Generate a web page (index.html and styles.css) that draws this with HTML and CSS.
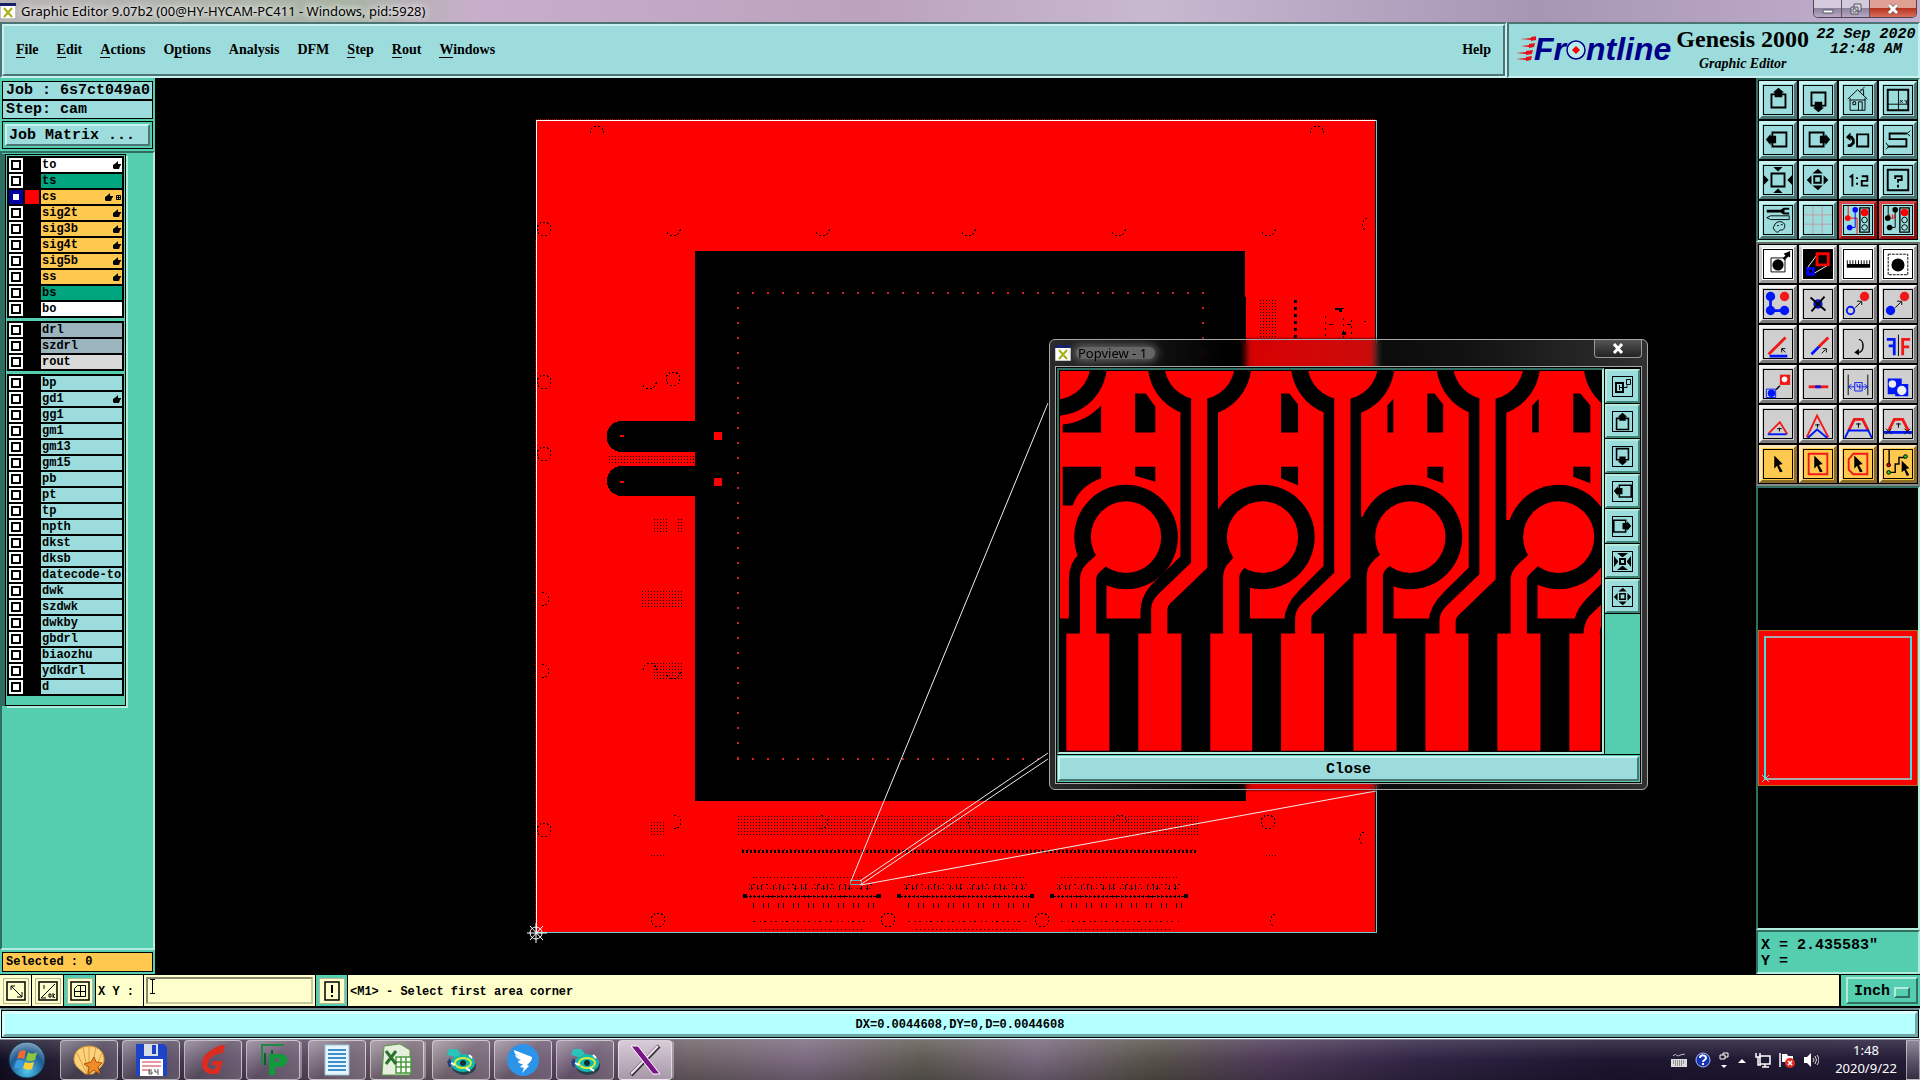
FILE: index.html
```html
<!DOCTYPE html>
<html lang="en">
<head>
  <meta charset="UTF-8" />
  <meta name="viewport" content="width=device-width, initial-scale=1.0" />
  <title>Graphic Editor 9.07b2</title>
  <link rel="stylesheet" href="styles.css">
</head>
<body>
  <!-- shared icons -->
  <svg width="0" height="0" class="defs" aria-hidden="true">
    <symbol id="i-up" viewBox="0 0 30 30"><path d="M8 9h15v14H8z" fill="none" stroke="#000" stroke-width="2"/><path d="M15.5 2l6 5h-2v5h-8V7h-2z"/></symbol>
    <symbol id="i-down" viewBox="0 0 30 30"><path d="M8 7h15v14H8z" fill="none" stroke="#000" stroke-width="2"/><path d="M15.5 28l-6-5h2v-6h8v6h2z"/></symbol>
    <symbol id="i-left" viewBox="0 0 30 30"><path d="M9 7h15v15H9z" fill="none" stroke="#000" stroke-width="2"/><path d="M2 14.500l5-6v2h6v8H7v2z"/></symbol>
    <symbol id="i-right" viewBox="0 0 30 30"><path d="M6 7h15v15H6z" fill="none" stroke="#000" stroke-width="2"/><path d="M28 14.500l-5-6v2h-6v8h6v2z"/></symbol>
    <symbol id="i-zoomin" viewBox="0 0 30 30"><path d="M8 8h14v14H8z" fill="none" stroke="#000" stroke-width="2"/><path d="M10 1h10l-5 5zM10 29h10l-5-5zM0 10v10l5-5zM30 10v10l-5-5z"/></symbol>
    <symbol id="i-zoomout" viewBox="0 0 30 30"><path d="M11 11h7v7h-7z" fill="none" stroke="#000" stroke-width="2"/><path d="M9 8h11l-5-5zM9 21h11l-5 5zM8 10v10l-5-5zM21 10v10l5-5z"/></symbol>
    <symbol id="i-cursor" viewBox="0 0 12 18"><path d="M1 0l9 9-4 1 4 7-3 1-3-7-3 3z"/></symbol>
    <symbol id="i-app" viewBox="0 0 16 16"><path d="M0 0h16v16H0z" fill="#fff" stroke="#889"/><path d="M0 0h16v3H0z" fill="#16216a"/><path d="M4 5l8 9M12 5l-8 9" stroke="#a6b013" stroke-width="2"/></symbol>
    <symbol id="i-disc" viewBox="0 0 34 34"><ellipse cx="20" cy="23" rx="12" ry="9" fill="#28404c"/><ellipse cx="19" cy="20" rx="12" ry="9" fill="#16b7ae"/><ellipse cx="19" cy="20" rx="8" ry="5" fill="none" stroke="#d9ec3a" stroke-width="2"/><circle cx="19" cy="20" r="3" fill="#102f38"/><path d="M5 6h8l4 5-6 3-8-2z" fill="#2bc4bc"/><path d="M5 16l3 6M4 18l2 6" stroke="#1c3c88" stroke-width="2"/><path d="M7 20l4 2M25 12l3 3M22 25l4 3" stroke="#fff" stroke-width="2"/></symbol>
  </svg>

  <header class="titlebar">
    <svg width="16" height="16"><use href="#i-app"/></svg>
    <span class="title">Graphic Editor 9.07b2 (00@HY-HYCAM-PC411 - Windows, pid:5928)</span>
    <div class="win-buttons">
      <button type="button" aria-label="Minimize"><svg width="12" height="12"><path d="M1 7h10v3H1z" fill="#fff" stroke="#556"/></svg></button>
      <button type="button" aria-label="Restore"><svg width="12" height="12"><path d="M4 1h7v7H4zM1 4h7v7H1z" fill="#ddd" stroke="#556"/><path d="M3 6h3v3H3z" fill="#fff" stroke="#556"/></svg></button>
      <button type="button" class="win-close" aria-label="Close window"><svg width="12" height="12"><path d="M2 2l8 8M10 2l-8 8" stroke="#644" stroke-width="4"/><path d="M2 2l8 8M10 2l-8 8" stroke="#fff" stroke-width="3"/></svg></button>
    </div>
  </header>

  <div class="topbar">
    <div class="menu-frame">
      <nav class="menu">
        <button type="button"><u>F</u>ile</button>
        <button type="button"><u>E</u>dit</button>
        <button type="button"><u>A</u>ctions</button>
        <button type="button">O<u>p</u>tions</button>
        <button type="button">Analysis</button>
        <button type="button">DFM</button>
        <button type="button"><u>S</u>tep</button>
        <button type="button"><u>R</u>out</button>
        <button type="button"><u>W</u>indows</button>
        <button type="button" class="help">Help</button>
      </nav>
    </div>
    <div class="brand">
      <div class="logo">
        <svg class="speed" width="20" height="26" viewBox="0 0 20 26"><path d="M4 3l11-1V1l6-1-1 4-5 1V4zM5 10l8-1V8l6-1-1 4-5 1v-1zM0 17l10-1v-1l7-1-1 4-6 1v-1zM0 23l10-1v-1l6-1-1 4-5 1v-1z" fill="#e8101c"/></svg>
        <span>Fr</span><svg width="20" height="22" viewBox="0 0 20 22"><circle cx="10" cy="12" r="9" fill="#b8ecec" stroke="#00008b" stroke-width="1.500"/><path d="M10 8l4 4-4 4-4-4z" fill="#f00"/></svg><span>ntline</span>
      </div>
      <div class="product"><strong>Genesis 2000</strong><em>Graphic Editor</em></div>
      <div class="clock">22 Sep 2020<br>12:48 AM</div>
    </div>
  </div>

  <main>
    <aside class="side">
      <div class="job-line">Job : 6s7ct049a0</div>
      <div class="job-line">Step: cam</div>
      <div class="matrix"><button type="button">Job Matrix ...</button></div>
      <div class="layers-pane">
        <div class="layers" id="layers"></div>
      </div>
      <div class="selected">Selected : 0</div>
    </aside>

    <section class="canvas">
      <svg class="board" width="100%" height="100%" shape-rendering="crispEdges">
        <defs>
          <pattern id="grid" width="3" height="3" patternUnits="userSpaceOnUse"><rect width="3" height="3" fill="#f00"/><rect width="1" height="1"/></pattern>
        </defs>
        <g transform="translate(-154 -78)">
          <rect x="537" y="121" width="838" height="811" fill="#f00"/>
          <path d="M536 120.500h840" stroke="#fff" fill="none"/>
          <path d="M536.500 120v812" stroke="#fff" fill="none"/>
          <path d="M1376 120v812H536" stroke="#5fd0d0" fill="none"/>
          <path d="M536 119.500h840M535.500 240v690" stroke="#a00" stroke-dasharray="1 1"/>
          <path d="M695 251h550v46h1v504H695z"/>
          <path d="M696 421h-74a15 15 0 0 0 0 31h74zM696 466h-74a15 15 0 0 0 0 30h74z"/>
          <path d="M620 435h4v2h-4zM620 481h4v2h-4zM714 432h8v8h-8zM714 478h8v8h-8z" fill="#f00"/>
          <path d="M737 293h467M737 759h467" stroke="#d0202a" stroke-width="2" stroke-dasharray="2 13"/>
          <path d="M738 292v468M1203 292v468" stroke="#d0202a" stroke-width="2" stroke-dasharray="2 13"/>

          <g fill="url(#grid)">
            <path d="M608 454h87v10h-87zM654 518h13v16h-13zM678 518h4v16h-4zM642 591h40v16h-40zM654 663h28v16h-28z"/>
            <path d="M738 816h460v21H738zM651 822h13v15h-13zM1260 298h17v42h-17zM651 854h13v2h-13zM1266 854h11v2h-11z"/>
          </g>
          <g id="marks" fill="none" stroke="#000" stroke-dasharray="2 2"></g>

          <!-- connector rows along the bottom edge -->
          <path d="M742 851h456" stroke="#000" stroke-width="3" stroke-dasharray="2 2"/>
          <path d="M742 849.500h456" stroke="#000" stroke-dasharray="1 5"/>
          <g id="connectors" stroke="#000" fill="none"></g>
          <path d="M743 894h4v4h-4zM877 894h4v4h-4zM897 894h4v4h-4zM1030 894h4v4h-4zM1050 894h4v4h-4zM1184 894h4v4h-4z"/>
          <path d="M1295.500 300v40" stroke="#000" stroke-width="3" stroke-dasharray="3 4"/>
          <path d="M1335 308h9v1h-2v3h-3v-2h-4zM1329 324h4v1h-4zM1347 324h4v1h-4zM1342 332h4v3h-4zM1364 321h2v1h-2z"/>
          <path d="M1325.500 316v24M1343.500 318v22M1351.500 320v20" stroke="#000" stroke-dasharray="2 4"/>

          <!-- leader lines to the popview -->
          <g stroke="#eee" fill="none" shape-rendering="auto">
            <path d="M850.500 880.500h11v4h-11z" stroke="#5fb0b0"/>
            <path d="M851 881L1048 403M860 881L1048 753M860 885L1048 759M861 885L1376 791"/>
          </g>
          <g stroke="#fff" fill="none" shape-rendering="auto">
            <circle cx="536" cy="933" r="6"/>
            <path d="M536 923v20M527 933h20M530 926l13 14M543 926l-13 14"/>
          </g>
        </g>
      </svg>

      <div class="popview">
        <div class="pop-title">
          <svg width="16" height="16"><use href="#i-app"/></svg>
          <span>Popview - 1</span>
          <button type="button" aria-label="Close popview"><svg width="12" height="11"><path d="M2 1l8 9M10 1l-8 9" stroke="#fff" stroke-width="3"/></svg></button>
        </div>
        <div class="pop-body">
          <div class="pop-row">
            <div class="pop-view">
              <svg viewBox="50 125 1368 1135" preserveAspectRatio="none">
                <rect x="50" y="125" width="1368" height="1135" fill="#f00"/>
                <!-- clearances -->
                <path d="M240 192h27l24 40v77h-51zM609 192h21l22 33v84h-43zM979 192h18l22 33v84h-40zM1348 192h18l25 36v81h-43zM878 228l15-20v101h-15zM1244 228l17-20v101h-17zM57 285q58-8 97-57v81H57z"/>
                <path d="M57 411h97v34q-56 24-72 82H57zM240 411h51v45l-51-18zM609 411h43v55l-43-21zM979 411h40v49l-40-17zM1348 411h43v49l-43-19z"/>
                <path d="M50 864h1368v396H50z"/>
                <ellipse cx="38" cy="104" rx="131" ry="155"/><ellipse cx="403" cy="104" rx="131" ry="155"/><ellipse cx="765" cy="104" rx="131" ry="155"/><ellipse cx="1133" cy="104" rx="131" ry="155"/><ellipse cx="1506" cy="104" rx="132" ry="155"/>
                <ellipse cx="217" cy="621" rx="131" ry="156"/><ellipse cx="562" cy="621" rx="132" ry="156"/><ellipse cx="936" cy="621" rx="131" ry="156"/><ellipse cx="1311" cy="621" rx="131" ry="156"/>
                <path d="M422 540h48v369H322v-80l100-114zM784 560h56v349H686v-49l98-120zM1153 570h60v339h-161v-41l101-118z"/>
                <g fill="none" stroke="#000" stroke-width="95">
                  <path d="M402 200v497l-72 82q-29 30-29 65v56M764 200v525l-72 85q-27 32-27 60v35M1131 200v530l-74 86q-27 31-27 60v35"/>
                  <path d="M155 680l-22 24q-13 14-13 45v151M520 680l-24 28q-13 14-13 45v151M890 680l-30 28q-14 14-14 45v151M1262 680l-38 30q-14 18-14 45v151M1480 762l-63 75q-22 28-22 60v10"/>
                </g>
                <!-- copper -->
                <g fill="#f00">
                  <ellipse cx="38" cy="104" rx="89" ry="106"/><ellipse cx="403" cy="104" rx="89" ry="106"/><ellipse cx="765" cy="104" rx="89" ry="106"/><ellipse cx="1133" cy="104" rx="89" ry="106"/>
                  <ellipse cx="217" cy="621" rx="89" ry="107"/><ellipse cx="562" cy="621" rx="90" ry="107"/><ellipse cx="936" cy="621" rx="89" ry="107"/><ellipse cx="1311" cy="621" rx="90" ry="107"/>
                  <path d="M66 909h109v350H66zM248 909h109v350H248zM430 909h106v350H430zM609 909h109v350H609zM792 909h109v350H792zM974 909h109v350H974zM1156 909h109v350h-109zM1338 909h78v350h-78z"/>
                </g>
                <g fill="none" stroke="#f00" stroke-width="41">
                  <path d="M402 190v515l-88 100q-13 14-13 32v80M764 190v545l-86 98q-13 14-13 32v50M1131 190v550l-88 100q-13 14-13 32v43"/>
                  <path d="M160 685l-26 28q-13 14-13 32v170M512 685l-16 22q-13 14-13 32v176M882 680l-22 22q-14 16-14 37v176M1256 680l-32 36q-14 16-14 32v170M1460 806l-54 62q-12 14-12 50"/>
                </g>
              </svg>
            </div>
            <div class="pop-tools">
              <button type="button" aria-label="Follow"><svg viewBox="0 0 19 19"><path d="M3 6h7v9H3z" fill="none" stroke="#000" stroke-width="2"/><path d="M13.500 2.500h4v5h-4zM7 10.500h7v-2M6.500 8v5" fill="none" stroke="#000"/></svg></button>
              <button type="button" aria-label="Pan up"><svg viewBox="4 1 23 24"><use href="#i-up" width="30" height="30"/></svg></button>
              <button type="button" aria-label="Pan down"><svg viewBox="4 5 23 24"><use href="#i-down" width="30" height="30"/></svg></button>
              <button type="button" aria-label="Pan left"><svg viewBox="1 3 24 24"><use href="#i-left" width="30" height="30"/></svg></button>
              <button type="button" aria-label="Pan right"><svg viewBox="5 3 24 24"><use href="#i-right" width="30" height="30"/></svg></button>
              <button type="button" aria-label="Zoom in"><svg viewBox="0 0 19 19"><path d="M7 7h5v5H7z" fill="none" stroke="#000" stroke-width="2"/><path d="M4 1h11l-5 4H9zM4 18h11l-5-4H9zM1 4v11l4-5V9zM18 4v11l-4-5V9z"/></svg></button>
              <button type="button" aria-label="Zoom out"><svg viewBox="2 2 25 25"><use href="#i-zoomout" width="30" height="30"/></svg></button>
            </div>
          </div>
          <div class="pop-close"><button type="button">Close</button></div>
        </div>
      </div>
    </section>

    <aside class="tools">
      <div class="tool-grid view-tools">
        <button type="button" aria-label="Pan up"><svg><use href="#i-up"/></svg></button>
        <button type="button" aria-label="Pan down"><svg><use href="#i-down"/></svg></button>
        <button type="button" aria-label="Home"><svg viewBox="0 0 30 30"><path d="M4 14L14.500 4 25 14M6.500 13v13h16V13M6 15h17M15.500 26v-9h4v9M9.500 17h3v3h-3zM18 6V4h3v6M20 3l2-2" fill="none" stroke="#000"/></svg></button>
        <button type="button" aria-label="XY zoom"><svg viewBox="0 0 30 30"><path d="M4 4h22v22H4z" fill="none" stroke="#000" stroke-width="2"/><path d="M15.500 4v22M4 19.500h22M17 15l3 3M20 15l-3 3M22 15l2 2 1-2M24 17v2" fill="none" stroke="#000"/></svg></button>
        <button type="button" aria-label="Pan left"><svg><use href="#i-left"/></svg></button>
        <button type="button" aria-label="Pan right"><svg><use href="#i-right"/></svg></button>
        <button type="button" aria-label="Previous view"><svg viewBox="0 0 30 30"><path d="M14 9h12v13H14z" fill="none" stroke="#000" stroke-width="2"/><path d="M4 12h4l2 3v3l-3 3H4" fill="none" stroke="#000" stroke-width="3"/><path d="M2 12l5-5v9z"/></svg></button>
        <button type="button" aria-label="Serpentine"><svg viewBox="0 0 30 30"><path d="M25 8H6v6h18v8H4" fill="none" stroke="#000" stroke-width="2"/><path d="M28 5l-3 3 3 3M2 18l3 4-3 3" fill="none" stroke="#000"/></svg></button>
        <button type="button" aria-label="Zoom in"><svg><use href="#i-zoomin"/></svg></button>
        <button type="button" aria-label="Zoom out"><svg><use href="#i-zoomout"/></svg></button>
        <button type="button" aria-label="Scale 1:2"><svg viewBox="0 0 30 30"><path d="M6 12l3-2v12M14 12v2M14 18v2M19 11h6v5h-6v5h7" fill="none" stroke="#000" stroke-width="2"/></svg></button>
        <button type="button" aria-label="Query"><svg viewBox="0 0 30 30"><path d="M4 4h22v22H4z" fill="none" stroke="#000" stroke-width="2"/><path d="M12 14v-3h7v4h-4v3M15 20v3" fill="none" stroke="#000" stroke-width="2"/></svg></button>
        <button type="button" aria-label="Setup"><svg viewBox="0 0 30 30"><path d="M3 4h15v3H3zM27 2h-6l-3 2v3l3 2h6V7h-5V4h5z"/><path d="M3 12.500l4-2h20v4H7zM12 19c5-5 12-1 10 4s-5 1-6 4-6-1-6-4zM14 21h2M18 20h2" fill="none" stroke="#000"/></svg></button>
        <button type="button" aria-label="Grid"><svg viewBox="0 0 30 30"><path d="M9.500 0v30M19.500 0v30M0 9.500h30M0 19.500h30" stroke="#c79aa2"/></svg></button>
        <button type="button" class="alert" aria-label="Snap"><svg viewBox="0 0 30 30"><path d="M4.500 0v13H14v17" fill="none" stroke="#f00"/><path d="M12 4v19H6" fill="none" stroke="#00f"/><circle cx="12" cy="4" r="3" fill="#00f"/><circle cx="6" cy="23" r="3" fill="#00f"/><circle cx="4" cy="13" r="3" fill="#f00"/><path d="M17 2h10v26H17z" fill="none" stroke="#000" stroke-width="1.500"/><circle cx="22" cy="7" r="4" fill="#f00"/><circle cx="22" cy="15" r="3" fill="none" stroke="#000"/><circle cx="22" cy="23" r="3" fill="none" stroke="#000"/></svg></button>
        <button type="button" class="alert" aria-label="Net check"><svg viewBox="0 0 30 30"><path d="M4.500 0v13M12 4v19H6" fill="none" stroke="#000"/><path d="M5 13h6M6 13v-4M9 13v-4M11 13V9" stroke="#f00"/><circle cx="12" cy="4" r="3"/><circle cx="6" cy="23" r="3"/><circle cx="4" cy="13" r="3"/><path d="M17 2h10v26H17z" fill="none" stroke="#000" stroke-width="1.500"/><circle cx="22" cy="7" r="4" fill="#f00"/><circle cx="22" cy="15" r="3" fill="none" stroke="#000"/><circle cx="22" cy="23" r="3" fill="none" stroke="#000"/></svg></button>
      </div>

      <div class="tool-grid edit-tools">
        <button type="button" class="white" aria-label="Select feature"><svg viewBox="0 0 30 30"><path d="M7.500 8.500h15v15h-15z" fill="none" stroke="#000"/><circle cx="15" cy="16" r="6"/><path d="M20 9l3-3-2-2 7-3v7l-2-1-4 4z"/></svg></button>
        <button type="button" class="white" aria-label="Popview"><svg viewBox="0 0 30 30"><path d="M0 0h30v30H0z"/><path d="M3 20L14 5M9 26l17-10" stroke="#fff"/><path d="M14 4h12v12H14z" fill="none" stroke="#f00" stroke-width="3"/><path d="M4 20h6v6H4z" fill="none" stroke="#00f" stroke-width="3"/></svg></button>
        <button type="button" class="white" aria-label="Measure"><svg viewBox="0 0 30 30"><path d="M3 11v8h25v-8h-1v4h-2v-4h-1v4h-2v-4h-1v4h-2v-4h-1v4h-2v-4h-1v4h-2v-4h-1v4h-2v-4h-1v4H7v-4H6v4H4v-4z"/></svg></button>
        <button type="button" class="white" aria-label="Highlight"><svg viewBox="0 0 30 30"><path d="M4.500 4.500h21v22h-21z" fill="none" stroke="#000" stroke-dasharray="3 1"/><circle cx="15" cy="16" r="7"/></svg></button>
        <button type="button" aria-label="Net"><svg viewBox="0 0 30 30"><path d="M7 7v15h14" fill="none" stroke="#0018f8" stroke-width="3"/><g fill="#0018f8"><circle cx="7" cy="7" r="5"/><circle cx="7" cy="22" r="5"/><circle cx="22" cy="22" r="5"/></g><circle cx="22" cy="7" r="5" fill="#f01818"/></svg></button>
        <button type="button" aria-label="Delete"><svg viewBox="0 0 30 30"><circle cx="15" cy="15" r="5" fill="#0018c8"/><path d="M7 8l16 14M22 7L8 23" stroke="#000" stroke-width="2"/></svg></button>
        <button type="button" aria-label="Move"><svg viewBox="0 0 30 30"><circle cx="22" cy="7" r="5" fill="#f01818"/><circle cx="7" cy="22" r="4" fill="none" stroke="#0018f8" stroke-width="2"/><path d="M12 19l6-6M14 12h5v4" fill="none" stroke="#000"/></svg></button>
        <button type="button" aria-label="Copy"><svg viewBox="0 0 30 30"><circle cx="22" cy="7" r="5" fill="#f01818"/><circle cx="7" cy="22" r="5" fill="#0018f8"/><path d="M12 19l6-6M14 12h5v4" fill="none" stroke="#000"/></svg></button>
        <button type="button" aria-label="Rotate line"><svg viewBox="0 0 30 30"><path d="M5 26L23 8" stroke="#f01818" stroke-width="3"/><path d="M6 28h19" stroke="#0018f8" stroke-width="3"/><path d="M23 24l-4-4M19 24v-4h4" fill="none" stroke="#000"/></svg></button>
        <button type="button" aria-label="Stretch line"><svg viewBox="0 0 30 30"><path d="M8 26l9-9" stroke="#0018f8" stroke-width="3"/><path d="M16 18L26 8" stroke="#f01818" stroke-width="3"/><path d="M19 25l4-4M20 20h4v4" fill="none" stroke="#000"/></svg></button>
        <button type="button" aria-label="Rotate"><svg viewBox="0 0 30 30"><path d="M16 10c6 1 6 14-1 14" fill="none" stroke="#000" stroke-width="1.500"/><path d="M11 24l5-4v7z"/></svg></button>
        <button type="button" aria-label="Mirror"><svg viewBox="0 0 30 30"><path d="M3 10h8v17M5 17h6" fill="none" stroke="#0018f8" stroke-width="3"/><path d="M15.500 5v23" stroke="#000"/><path d="M28 10h-8v17M20 18h7" fill="none" stroke="#f01818" stroke-width="3"/></svg></button>
        <button type="button" aria-label="Change symbol"><svg viewBox="0 0 30 30"><path d="M17 5h11v11H17z" fill="#f01818"/><circle cx="22" cy="10" r="3" fill="#fff"/><path d="M2.500 20.500h10v9h-10z" fill="none" stroke="#0018f8"/><circle cx="8" cy="25" r="4" fill="#0018f8"/><path d="M13 21l4-4" stroke="#000" stroke-width="1.500"/></svg></button>
        <button type="button" aria-label="Break line"><svg viewBox="0 0 30 30"><path d="M5 18h21" stroke="#f01818" stroke-width="3"/><path d="M12 18h6" stroke="#0018f8" stroke-width="3"/></svg></button>
        <button type="button" aria-label="Spacing"><svg viewBox="0 0 30 30"><path d="M4.500 5v22M25.500 5v22" stroke="#000"/><path d="M5 18h6M19 18h6M8 15l-3 3 3 3M22 15l3 3-3 3M11.500 13.500h8v9h-8zM14 15v3h4M17 15v6" fill="none" stroke="#0018f8"/></svg></button>
        <button type="button" aria-label="Merge"><svg viewBox="0 0 30 30"><path d="M4 9h15v6h7v13H12v-2H4z" fill="#0018f8"/><circle cx="9" cy="15" r="4" fill="#eee"/><circle cx="19" cy="22" r="5" fill="#eee"/></svg></button>
        <button type="button" aria-label="Arc up"><svg viewBox="0 0 30 30"><path d="M5 25l12-12 8 13" fill="none" stroke="#f01818" stroke-width="2"/><path d="M4 26h20" stroke="#0018f8" stroke-width="2"/><path d="M16.500 23v-4M14 20h5" stroke="#000"/></svg></button>
        <button type="button" aria-label="Peak"><svg viewBox="0 0 30 30"><path d="M3 29L14 6l12 23" fill="none" stroke="#f01818" stroke-width="2"/><path d="M4 30l10-9 11 9" fill="none" stroke="#0018f8" stroke-width="2"/><path d="M14.500 19v-4M12 16h5" stroke="#000"/></svg></button>
        <button type="button" aria-label="Trapezoid"><svg viewBox="0 0 30 30"><path d="M5 22l6-12h9l6 12" fill="none" stroke="#f01818" stroke-width="3"/><path d="M1 30l4-8h21l4 8" fill="none" stroke="#0018f8" stroke-width="2"/><path d="M15.500 19v-5M13 15h5" stroke="#000"/></svg></button>
        <button type="button" aria-label="Trapezoid ends"><svg viewBox="0 0 30 30"><path d="M5 22l6-12h9l6 12" fill="none" stroke="#f01818" stroke-width="3"/><path d="M0 24h30" stroke="#0018f8" stroke-width="3"/><path d="M15.500 19v-5M13 15h5M2 20l6 6M8 20l-6 6M22 20l6 6M28 20l-6 6" stroke="#000"/></svg></button>
        <button type="button" class="pick" aria-label="Select"><svg viewBox="0 0 30 30"><use href="#i-cursor" x="10" y="6" width="12" height="18"/></svg></button>
        <button type="button" class="pick" aria-label="Select in box"><svg viewBox="0 0 30 30"><path d="M5 4h20v22H5z" fill="none" stroke="#f01818" stroke-width="2"/><use href="#i-cursor" x="10" y="6" width="12" height="18"/></svg></button>
        <button type="button" class="pick" aria-label="Select in polygon"><svg viewBox="0 0 30 30"><path d="M10 4h15v22H10l-5-5V10z" fill="none" stroke="#f01818" stroke-width="2"/><use href="#i-cursor" x="10" y="6" width="12" height="18"/></svg></button>
        <button type="button" class="pick" aria-label="Select net"><svg viewBox="0 0 30 30"><path d="M5.500 0v16M7 24h5v-9h4V8h7" fill="none" stroke="#000" stroke-width="1.500"/><circle cx="5" cy="16" r="2" fill="#c00" stroke="#000"/><circle cx="5" cy="24" r="2" fill="#2c2" stroke="#000"/><circle cx="23" cy="7" r="2" fill="#2c2" stroke="#000"/><use href="#i-cursor" x="18" y="11" width="11" height="17"/></svg></button>
      </div>

      <div class="preview">
        <div class="preview-job">
          <div class="preview-box"></div>
          <svg class="datum" width="7" height="7"><path d="M0 0l7 7M7 0L0 7" stroke="#6fe0e0"/></svg>
        </div>
      </div>
      <div class="coords">X = 2.435583"<br>Y =</div>
    </aside>
  </main>

  <div class="command">
    <button type="button" class="cmd" aria-label="Absolute"><svg width="20" height="20"><path d="M1 1h18v18H1z" fill="none" stroke="#000" stroke-width="1.500"/><path d="M5 5l11 11M5 9V5h4M16 11v5h-5" fill="none" stroke="#000"/></svg></button>
    <button type="button" class="cmd" aria-label="Relative"><svg width="20" height="20"><path d="M1 1h18v18H1z" fill="none" stroke="#000" stroke-width="1.500"/><path d="M3 17L17 3M3 17h5M6 4v4M11 13h2v3h-2zM15 12v5M17 13l-2 2 2 2" fill="none" stroke="#000"/></svg></button>
    <button type="button" class="cmd teal" aria-label="Grid mode"><svg width="20" height="20"><path d="M1 1h18v18H1z" fill="none" stroke="#000" stroke-width="1.500"/><path d="M7.500 4.500h8v11h-11v-8zM10.500 4v12M4 10.500h12" fill="none" stroke="#000"/></svg></button>
    <label for="xy">X Y :</label>
    <div class="xy-box"><input type="text" id="xy"><i class="ibeam"></i></div>
    <button type="button" class="cmd teal" aria-label="Run"><svg width="20" height="20"><path d="M3 1h14v18H3z" fill="none" stroke="#000" stroke-width="1.500"/><path d="M9 4h2v8H9zM9 14h2v2H9z"/></svg></button>
    <span class="prompt">&lt;M1&gt; - Select first area corner</span>
    <div class="units">
      <select aria-label="Units"><option>Inch</option><option>mm</option></select>
    </div>
  </div>

  <div class="message"><div>DX=0.0044608,DY=0,D=0.0044608</div></div>

  <footer class="taskbar">
    <button type="button" class="start" aria-label="Start"><svg width="40" height="40" viewBox="0 0 40 40"><defs><radialGradient id="orb" cx=".5" cy=".8" r=".8"><stop offset="0" stop-color="#52c8f0"/><stop offset=".6" stop-color="#1c5a92"/><stop offset="1" stop-color="#8aa8c0"/></radialGradient></defs><circle cx="20" cy="20" r="18" fill="url(#orb)" stroke="#10304c"/><path d="M12 12q4-3 7-1l-2 8q-4-2-7 0z" fill="#f06a30"/><path d="M21 12q4 3 9 0l-2 8q-5 2-9 0z" fill="#8cc63c"/><path d="M9 21q4-3 7 0l-2 8q-4-2-7 0z" fill="#3c9ce0"/><path d="M18 22q4 2 9 0l-2 7q-4 2-9-1z" fill="#fcd034"/></svg></button>
    <div class="tasks">
      <button type="button" aria-label="Shell"><svg viewBox="0 0 34 34"><path d="M17 3c10 0 16 7 15 15-1 6-7 9-11 13h-8C9 27 3 24 2 18 1 10 7 3 17 3z" fill="#fbd27c" stroke="#c98a2c"/><path d="M15 31L5 10M16 31L11 4M17 31V3M19 31l5-27M21 31l9-21" stroke="#e0a040" fill="none"/><path d="M22 14l2 5 6 1-4 4 2 7-6-4-6 4 1-7-5-3 7-2z" fill="#f28c28" stroke="#a85410"/></svg></button>
      <button type="button" aria-label="Save"><svg viewBox="0 0 34 34"><path d="M2 1h28l3 3v29H2z" fill="#1d44c8"/><path d="M10 1h14v12H10z" fill="#d8dce4"/><path d="M18 2h4v9h-4z" fill="#1d44c8"/><path d="M6 16h23v17H6z" fill="#fff"/><path d="M8 19h19M8 23h19M8 27h8" stroke="#d03040"/><path d="M18 27h-3v4h3v-2h-3M21 26v3h3M24 26v6" fill="none" stroke="#555"/></svg></button>
      <button type="button" aria-label="G editor"><svg viewBox="0 0 34 34"><path d="M29 2c-6 0-9 2-12 4C10 10 6 14 6 21c0 9 9 12 17 9l4-12H17l-2 4h6l-2 4c-6 1-8-2-7-6 1-6 7-9 15-10z" fill="#dc2c20"/></svg></button>
      <button type="button" class="stacked" aria-label="P tool"><svg viewBox="0 0 34 34"><path d="M6 22V2h22" fill="none" stroke="#1c8c44" stroke-width="2"/><path d="M13 32V11h12c9 0 8 13-1 13h-5v8zM19 15v4h4v-4z" fill="#109a3c"/><path d="M9 10v12M16 7v4" stroke="#0a6028" stroke-width="2"/></svg></button>
      <button type="button" aria-label="Notes"><svg viewBox="0 0 34 34"><path d="M5 2h24v30H5z" fill="#e8f4fb" stroke="#9cc4dc"/><path d="M8 7h18M8 11h18M8 15h18M8 19h18M8 23h18M8 27h18" stroke="#3a90c8" stroke-width="2"/></svg></button>
      <button type="button" class="stacked" aria-label="Spreadsheet"><svg viewBox="0 0 34 34"><path d="M4 3l16-2 10 6v25H2z" fill="#e4f0dc" stroke="#5c9848"/><path d="M16 14h15v16H16zM16 19h15M16 24h15M21 14v16M26 14v16" fill="#fff" stroke="#4a9a3c" stroke-width="1.500"/><path d="M6 8l10 13M16 8L6 21" stroke="#2c7030" stroke-width="3"/></svg></button>
      <button type="button" aria-label="Genesis"><svg><use href="#i-disc"/></svg></button>
      <button type="button" aria-label="DingTalk"><svg viewBox="0 0 34 34"><circle cx="17" cy="17" r="16" fill="#2c94e8"/><path d="M8 7l18 7c0 4-3 6-5 8l2 1-7 7 2-5-4-1 3-3c-4 0-5-2-5-3l3-1c-4-1-6-4-6-5l4 1C9 12 8 9 8 7z" fill="#fff"/></svg></button>
      <button type="button" aria-label="Genesis 2"><svg><use href="#i-disc"/></svg></button>
      <button type="button" class="active stacked" aria-label="X server"><svg viewBox="0 0 34 34"><path d="M31 3L3 32" stroke="#333" stroke-width="4"/><path d="M30 3L3 31" stroke="#f4e4f4" stroke-width="2"/><path d="M3 3h7l22 28h-7z" fill="#7a1488" stroke="#fff"/></svg></button>
    </div>
    <div class="tray">
      <svg width="16" height="16" viewBox="0 0 16 16"><path d="M0 7h16v8H0z" fill="#ddd"/><path d="M2 9h12M2 11h12M4 13h8" stroke="#444" stroke-dasharray="1 1"/><path d="M2 4c3-4 4 2 7-1l5-1" fill="none" stroke="#bbb"/></svg>
      <svg width="16" height="16" viewBox="0 0 16 16"><circle cx="8" cy="8" r="7" fill="#1432b8" stroke="#aab8e8"/><path d="M5 6c0-4 6-3 6 0 0 2-3 2-3 4M8 11v2" fill="none" stroke="#fff" stroke-width="2"/></svg>
      <svg width="10" height="18" viewBox="0 0 10 18"><path d="M1 4h5v4H1zM4 4V2h5v4H6" fill="none" stroke="#fff"/><path d="M2 14h6l-3 3z" fill="#fff"/></svg>
      <svg width="10" height="16" viewBox="0 0 10 16"><path d="M1 11h8L5 7z" fill="#fff"/></svg>
      <svg width="16" height="16" viewBox="0 0 16 16"><path d="M5 4h10v8H5zM7 15h7M10 12v3" fill="none" stroke="#fff" stroke-width="1.500"/><path d="M1 1v4h4V1M3 5v8h3" fill="none" stroke="#fff" stroke-width="1.500"/></svg>
      <svg width="16" height="16" viewBox="0 0 16 16"><path d="M1 1v14" stroke="#fff" stroke-width="1.500"/><path d="M3 2h5l1 2h5v6H3z" fill="#fff"/><circle cx="11" cy="11" r="5" fill="#e02c20"/><path d="M9 9l4 4M13 9l-4 4" stroke="#fff" stroke-width="1.500"/></svg>
      <svg width="16" height="16" viewBox="0 0 16 16"><path d="M1 5h3l4-4v14l-4-4H1z" fill="#fff"/><path d="M10 6q2 2 0 4M12 4q3 4 0 8M14 3q4 5 0 10" fill="none" stroke="#ddd"/></svg>
    </div>
    <time class="wall-clock">1:48<br>2020/9/22</time>
    <button type="button" class="show-desktop" aria-label="Show desktop"></button>
  </footer>

  <script src="script.js"></script>
</body>
</html>
```

FILE: styles.css
```css
* {
  box-sizing: border-box;
}

body {
  margin: 0;
  height: 100vh;
  display: flex;
  flex-direction: column;
  overflow: hidden;
  background: #000;
  color: #000;
  font-family: "Liberation Mono", monospace;
  font-size: 12px;
  font-weight: bold;
}

button, input, select {
  margin: 0;
  padding: 0;
  border: 0;
  border-radius: 0;
  background: none;
  color: inherit;
  font: inherit;
}

svg {
  display: block;
  flex: none;
}

.defs { position: absolute; }

/* window title */
.titlebar {
  display: flex;
  align-items: center;
  gap: 5px;
  height: 22px;
  background:
    radial-gradient(ellipse at 436px 12px, #2f7a38 0, transparent 12px),
    radial-gradient(ellipse at 477px 14px, #3f8a48 0, transparent 14px),
    radial-gradient(ellipse at 522px 10px, #6f9a78 0, transparent 12px),
    radial-gradient(ellipse at 1710px 20px, #55505c 0, transparent 24px),
    radial-gradient(ellipse at 1790px 20px, #56749a 0, transparent 24px),
    linear-gradient(90deg, #b9b4b6, #a8b4a4 18%, #c9aecb 25%, #bba2bd 45%, #c8b8d0 60%, #a795b4 80%, #c4b0d0);
  font-family: "Noto Sans", sans-serif;
  font-size: 13px;
  font-weight: normal;
}

.title { text-shadow: 0 0 6px #fff, 0 0 8px #fff; }

.win-buttons {
  display: flex;
  align-self: flex-start;
  margin-left: auto;
  margin-right: 3px;
  border: 1px solid #4c4456;
  border-top: 0;
  border-radius: 0 0 5px 5px;
  overflow: hidden;
}

.win-buttons button {
  display: grid;
  place-items: center;
  width: 28px;
  height: 17px;
  border-right: 1px solid #5c5064;
  background: linear-gradient(#d4cadb 45%, #8f839c 50%, #b8a8c4);
}

.win-buttons .win-close {
  width: 46px;
  border-right: 0;
  background: linear-gradient(#e0a094 45%, #b83420 50%, #d8705c);
}

/* menu and brand */
.topbar {
  display: flex;
  height: 56px;
  background: #9cdcdc;
}

.menu-frame, .brand {
  border: 2px solid;
  border-color: #4c7474 #c8f2f2 #c8f2f2 #4c7474;
}

.menu-frame { flex: 1; }

.menu {
  display: flex;
  align-items: center;
  gap: 18px;
  height: 100%;
  padding: 0 12px;
  border: 2px solid;
  border-color: #c8f2f2 #4c7474 #4c7474 #c8f2f2;
  font-family: "Liberation Serif", serif;
  font-size: 14px;
}

.menu u {
  text-decoration: none;
  border-bottom: 1px solid #000;
}

.help { margin-left: auto; }

.brand {
  display: flex;
  align-items: flex-start;
  width: 413px;
  padding-left: 7px;
  gap: 5px;
}

.logo {
  display: flex;
  align-items: center;
  padding-top: 7px;
  color: #00008b;
  font: italic bold 32px/36px "Liberation Sans", sans-serif;
}

.speed { margin-right: -2px; }

.product {
  display: flex;
  flex-direction: column;
  align-items: center;
  font-family: "Liberation Serif", serif;
}

.product strong {
  font-size: 24px;
  line-height: 30px;
}

.product em {
  font-size: 14px;
  line-height: 20px;
}

.clock {
  flex: 1;
  font-size: 15px;
  font-style: italic;
  line-height: 15px;
  padding-top: 3px;
  text-align: center;
  white-space: nowrap;
}

main {
  display: flex;
  flex: 1;
  min-height: 0;
}

/* left column */
.side {
  display: flex;
  flex-direction: column;
  width: 155px;
  padding-top: 3px;
  background: #55ceb0;
  z-index: 1;
}

.job-line {
  height: 19px;
  margin: 0 2px;
  padding-left: 3px;
  border: 1px solid #000;
  background: #9cdcdc;
  font-size: 15px;
  line-height: 18px;
}

.matrix {
  margin: 2px 2px;
  padding: 2px;
  border: 1px solid #000;
}

.matrix button {
  width: 100%;
  height: 22px;
  padding-left: 2px;
  border: 2px solid;
  border-color: #c8f2f2 #4c7474 #4c7474 #c8f2f2;
  background: #9cdcdc;
  font-size: 15px;
  text-align: left;
}

.layers-pane {
  flex: 1;
  padding: 1px 0 0 3px;
  border: 2px solid;
  border-color: #2f6e60 #b4ecdc #b4ecdc #2f6e60;
}

.layers {
  width: 121px;
  padding: 1px 1px 9px;
  border: 1px solid #000;
  box-shadow: 2px 2px 0 #b4ecdc, -3px 0 0 #2f6e60;
}

.layer-group {
  display: flex;
  flex-direction: column;
  gap: 2px;
  padding: 2px;
  background: #000;
}

.layer-group + .layer-group { margin-top: 3px; }

.layer {
  display: flex;
  gap: 2px;
  height: 14px;
}

.layer input {
  appearance: none;
  flex: none;
  width: 14px;
  height: 14px;
  border: 2px solid #fff;
  background: #fff;
  outline: 2px solid #000;
  outline-offset: -4px;
}

.layer input:checked {
  border-color: #0000a0;
  outline-color: #0000a0;
}

.swatch {
  flex: none;
  width: 14px;
}

.swatch.on { background: #f00; }

.layer label {
  display: flex;
  flex: 1;
  align-items: center;
  gap: 3px;
  padding: 0 1px;
  line-height: 14px;
  white-space: nowrap;
}

.layer label svg:first-of-type { margin-left: auto; }

.silk { background: #fff; }
.mask { background: #00a57e; }
.signal { background: #ffc84e; }
.drill { background: #9bb4be; }
.rout { background: #d9d9d9; }
.misc { background: #9cdcdc; }

.selected {
  height: 20px;
  margin: 2px;
  padding-left: 3px;
  border: 1px solid #000;
  background: #ffc84e;
  line-height: 18px;
}

/* board */
.canvas {
  position: relative;
  flex: 1;
  min-width: 0;
  margin-left: -1px;
  z-index: 0;
}

.board { overflow: hidden; }

.popview {
  position: absolute;
  left: 895px;
  top: 261px;
  width: 599px;
  padding: 0 5px 5px;
  border: 1px solid #a8a8a8;
  border-radius: 6px;
  background: linear-gradient(90deg, rgba(70, 70, 70, 0.6), rgba(0, 0, 0, 0.15) 30%, rgba(60, 60, 60, 0.3) 70%, rgba(80, 80, 80, 0.6));
  box-shadow: 0 0 3px #000;
  backdrop-filter: blur(3px);
}

.pop-title {
  display: flex;
  align-items: center;
  gap: 5px;
  height: 26px;
  font-family: "Noto Sans", sans-serif;
  font-size: 13px;
  font-weight: normal;
}

.pop-title span {
  padding: 0 8px 0 2px;
  border-radius: 8px;
  background: #666;
  box-shadow: 0 0 8px 2px #666;
  line-height: 12px;
}

.pop-title button {
  display: grid;
  place-items: center;
  align-self: flex-start;
  width: 48px;
  height: 18px;
  margin-left: auto;
  border: 1px solid #999;
  border-top: 0;
  border-radius: 0 0 4px 4px;
  background: linear-gradient(#555, #222);
}

.pop-body {
  padding: 1px;
  border: 1px solid #a8a8a8;
  background: #000;
}

.pop-row {
  display: flex;
  gap: 1px;
  height: 386px;
}

.pop-view {
  flex: 1;
  padding: 1px;
  border: 2px solid;
  border-color: #2f6e60 #b4ecdc #b4ecdc #2f6e60;
  background: #000;
}

.pop-view svg {
  width: 100%;
  height: 100%;
}

.pop-tools {
  display: flex;
  flex-direction: column;
  gap: 1px;
  width: 35px;
  padding-top: 1px;
  background: #55ceb0;
}

.pop-tools button {
  display: grid;
  place-items: center;
  height: 34px;
  border: 2px solid;
  border-color: #b4ecdc #3c8474 #3c8474 #b4ecdc;
  background: #9cdcdc;
  outline: 1px solid #000;
}

.pop-tools svg {
  width: 21px;
  height: 21px;
  border: 1px solid #000;
}

.pop-close {
  margin-top: 1px;
  padding: 1px;
  background: #55ceb0;
}

.pop-close button {
  width: 100%;
  height: 25px;
  padding-top: 1px;
  border: 2px solid;
  border-color: #c8f2f2 #4c7474 #4c7474 #c8f2f2;
  background: #9cdcdc;
  font-size: 15px;
}

/* right column */
.tools {
  display: flex;
  flex-direction: column;
  width: 164px;
}

.tool-grid {
  display: grid;
  grid-template-columns: repeat(4, 1fr);
  gap: 2px;
  padding: 1px;
  border: 2px solid;
  background: #000;
}

.view-tools { border-color: #2f6e60 #b4ecdc #b4ecdc #2f6e60; }

.edit-tools { border-color: #666 #888 #888 #666; }

.tool-grid button {
  display: grid;
  place-items: center;
  height: 38px;
  border: 3px solid;
  border-color: #c8f2f2 #4c7474 #4c7474 #c8f2f2;
  background: #9cdcdc;
}

.tool-grid svg {
  width: 30px;
  height: 30px;
  border: 1px solid #000;
}

.tool-grid .alert {
  border-color: #d84848 #901010 #901010 #d84848;
}

.edit-tools button {
  border-color: #f4f4f4 #7c7c7c #7c7c7c #f4f4f4;
  background: #cfcfcf;
}

.edit-tools .white {
  border-color: #eee #999 #999 #ccc;
  background: #fff;
}

.edit-tools .pick {
  border-color: #ffe8b0 #8c6c28 #8c6c28 #ffe8b0;
  background: #ffc84e;
}

.preview {
  display: flex;
  flex: 1;
  flex-direction: column;
  justify-content: center;
  border: 2px solid;
  border-color: #2f6e60 #b4ecdc #b4ecdc #2f6e60;
}

.preview-job {
  position: relative;
  height: 156px;
  padding: 5px;
  border: 1px solid #a07828;
  background: #f00;
}

.preview-box {
  height: 100%;
  border: 2px solid;
  border-color: #b0a8a8 #40e0e0;
}

.datum {
  position: absolute;
  left: 3px;
  bottom: 3px;
}

.coords {
  height: 44px;
  padding: 6px 3px 0;
  border: 2px solid;
  border-color: #2f6e60 #b4ecdc #b4ecdc #2f6e60;
  background: #55ceb0;
  font-size: 15px;
  line-height: 16px;
}

/* command line */
.command {
  display: flex;
  align-items: stretch;
  height: 34px;
  padding: 1px 0 2px;
  background: #000;
}

.command > * { background: #ffffcc; }

.cmd {
  display: grid;
  place-items: center;
  width: 31px;
  margin-right: 1px;
  border: 3px solid #ffffcc;
}

.cmd svg {
  outline: 1px solid #b8b894;
  outline-offset: 2px;
}

.command .teal { border-color: #55ceb0; }

.command label {
  width: 47px;
  padding-left: 2px;
  line-height: 34px;
}

.xy-box {
  position: relative;
  width: 171px;
  margin: 0 1px;
  padding: 2px;
}

.xy-box input {
  width: 100%;
  height: 100%;
  border: 2px solid;
  border-color: #888870 #c8c8a0 #c8c8a0 #888870;
}

.ibeam {
  position: absolute;
  left: 6px;
  top: 4px;
  width: 5px;
  height: 15px;
  border: 1px solid #000;
  border-width: 1px 0;
  background: linear-gradient(90deg, transparent 2px, #000 2px, #000 3px, transparent 3px);
}

.prompt {
  flex: 1;
  padding-left: 2px;
  line-height: 34px;
}

.command .units {
  position: relative;
  width: 79px;
  margin-left: 2px;
  padding: 2px 2px 2px 5px;
  background: #55ceb0;
}

.units select {
  appearance: none;
  width: 100%;
  height: 100%;
  padding: 2px 0 0 6px;
  border: 2px solid;
  border-color: #b4ecdc #2f6e60 #2f6e60 #b4ecdc;
  background: #55ceb0;
  font-size: 15px;
}

.units::after {
  content: "";
  position: absolute;
  right: 10px;
  top: 12px;
  width: 12px;
  height: 7px;
  border: 2px solid;
  border-color: #b4ecdc #2f6e60 #2f6e60 #b4ecdc;
  pointer-events: none;
}

.message {
  height: 31px;
  padding: 1px;
  border: 1px solid #d8ffff;
  border-top: 2px solid #6a8c8c;
  background: #000;
}

.message div {
  height: 100%;
  border: 3px solid;
  border-color: #d8ffff #6fa6a6 #6fa6a6 #d8ffff;
  background: #b4ffff;
  line-height: 22px;
  text-align: center;
}

/* desktop taskbar */
.taskbar {
  display: flex;
  align-items: stretch;
  height: 41px;
  border-top: 1px solid #8c8494;
  background:
    linear-gradient(rgba(255, 255, 255, 0.15), transparent 50%, rgba(0, 0, 0, 0.2)),
    linear-gradient(90deg, #120e22, #3c3048 6%, #55405c 14%, #6a5a66 22%, #584060 30%, #6e6266 36%, #7c6a80 42%, #5e5a52 48%, #77677c 54%, #565248 60%, #4e3a58 66%, #302444 74%, #1c1630 84%, #241c38);
  color: #fff;
  font-family: "Noto Sans", sans-serif;
  font-size: 13px;
  font-weight: normal;
}

.start { padding: 0 13px 0 7px; }

.tasks {
  display: flex;
  flex: 1;
  gap: 4px;
}

.tasks button {
  display: grid;
  place-items: center;
  width: 58px;
  border: 1px solid rgba(255, 255, 255, 0.55);
  border-radius: 4px;
  background: linear-gradient(135deg, rgba(255, 255, 255, 0.4), rgba(255, 255, 255, 0.12) 50%, rgba(255, 255, 255, 0.2));
}

.tasks .stacked {
  width: 54px;
  margin-right: 4px;
  box-shadow: 3px 0 0 -1px rgba(255, 255, 255, 0.35);
}

.tasks .active { background: linear-gradient(#d8ccd8, #a898a8); }

.tasks svg {
  width: 34px;
  height: 34px;
}

.tray {
  display: flex;
  align-items: center;
  gap: 8px;
}

.wall-clock {
  width: 80px;
  margin-left: 7px;
  padding-top: 1px;
  line-height: 18px;
  text-align: center;
}

.show-desktop {
  width: 14px;
  border: 1px solid rgba(255, 255, 255, 0.5);
  background: linear-gradient(rgba(255, 255, 255, 0.4), rgba(255, 255, 255, 0.1));
}
```

FILE: script.js
```js
// [name, style, open in editor]
const groups = [
  [["to", "silk", 1], ["ts", "mask"], ["cs", "signal", 1], ["sig2t", "signal", 1], ["sig3b", "signal", 1],
   ["sig4t", "signal", 1], ["sig5b", "signal", 1], ["ss", "signal", 1], ["bs", "mask"], ["bo", "silk"]],
  [["drl", "drill"], ["szdrl", "drill"], ["rout", "rout"]],
  [["bp"], ["gd1", "misc", 1], ["gg1"], ["gm1"], ["gm13"], ["gm15"], ["pb"], ["pt"], ["tp"], ["npth"],
   ["dkst"], ["dksb"], ["datecode-to"], ["dwk"], ["szdwk"], ["dwkby"], ["gbdrl"], ["biaozhu"], ["ydkdrl"], ["d"]]
];

const hand = `<svg width="8" height="9"><path d="M0 4l3-2 2-2v3h3v1l-1 1-1 3H1L0 7z"/></svg>`;
const snap = `<svg width="5" height="7"><path d="M.5 1.500h4v4h-4zM2.500 1v5M0 3.500h5" fill="none" stroke="#000"/></svg>`;

document.getElementById("layers").innerHTML = groups.map(group => `
  <div class="layer-group">
    ${group.map(([name, type = "misc", used]) => `
      <div class="layer">
        <input type="checkbox" id="layer-${name}" ${name === "cs" ? "checked" : ""} />
        <span class="swatch ${name === "cs" ? "on" : ""}"></span>
        <label for="layer-${name}" class="${type}">${name}${used ? hand : ""}${name === "cs" ? snap : ""}</label>
      </div>`).join("")}
  </div>`).join("");

// registration marks: centre and which arc is visible
const marks = [
  [597, 133, "top"], [1317, 133, "top"], [544, 229], [673, 229, "low"], [822, 229, "low"], [968, 229, "low"],
  [1118, 229, "low"], [1268, 229, "low"], [1364, 224, "left"], [544, 382], [649, 382, "low"], [673, 379],
  [544, 454], [544, 599, "right"], [544, 671, "right"], [650, 670, "top"], [673, 672, "low"],
  [544, 830], [676, 822, "right"], [823, 822, "right"], [970, 822, "left"], [1120, 822, "top"],
  [1268, 822], [1361, 838, "left"], [658, 920], [888, 920], [1042, 920], [1272, 920, "left"]
];

const arcs = {
  top: (x, y) => `M${x - 7} ${y}a7 7 0 0 1 14 0`,
  low: (x, y) => `M${x - 6} ${y + 3}a7 7 0 0 0 13 -5`,
  left: (x, y) => `M${x + 3} ${y - 6}a7 7 0 0 0 0 13`,
  right: (x, y) => `M${x - 2} ${y - 7}a7 7 0 0 1 0 14`
};

document.getElementById("marks").innerHTML = marks.map(([x, y, part]) =>
  part ? `<path d="${arcs[part](x, y)}" />` : `<circle cx="${x}" cy="${y}" r="7" />`).join("");

document.getElementById("connectors").innerHTML = [745, 900, 1053].map(x => `
  <path d="M${x + 8} 877.500h118" stroke-dasharray="1 2 1 3" />
  <path d="M${x + 6} 887h120" stroke-width="5" stroke-dasharray="1 5 1 3 1 11" />
  <path d="M${x + 4} 884.500h126" stroke-dasharray="1 3 2 7" />
  <path d="M${x + 4} 888.500h126" stroke-dasharray="1 2 1 5" />
  <path d="M${x} 896h134" stroke-width="3" stroke-dasharray="1 4 1 3" />
  <path d="M${x} 896.500h134" stroke-dasharray="3 1" />
  <path d="M${x + 8} 905h124" stroke-width="5" stroke-dasharray="1 9 1 4" />
  <path d="M${x + 8} 921.500h120" stroke-dasharray="2 5 1 3" />
  <path d="M${x + 16} 929.500h104" stroke-dasharray="1 3" />`).join("");
```
